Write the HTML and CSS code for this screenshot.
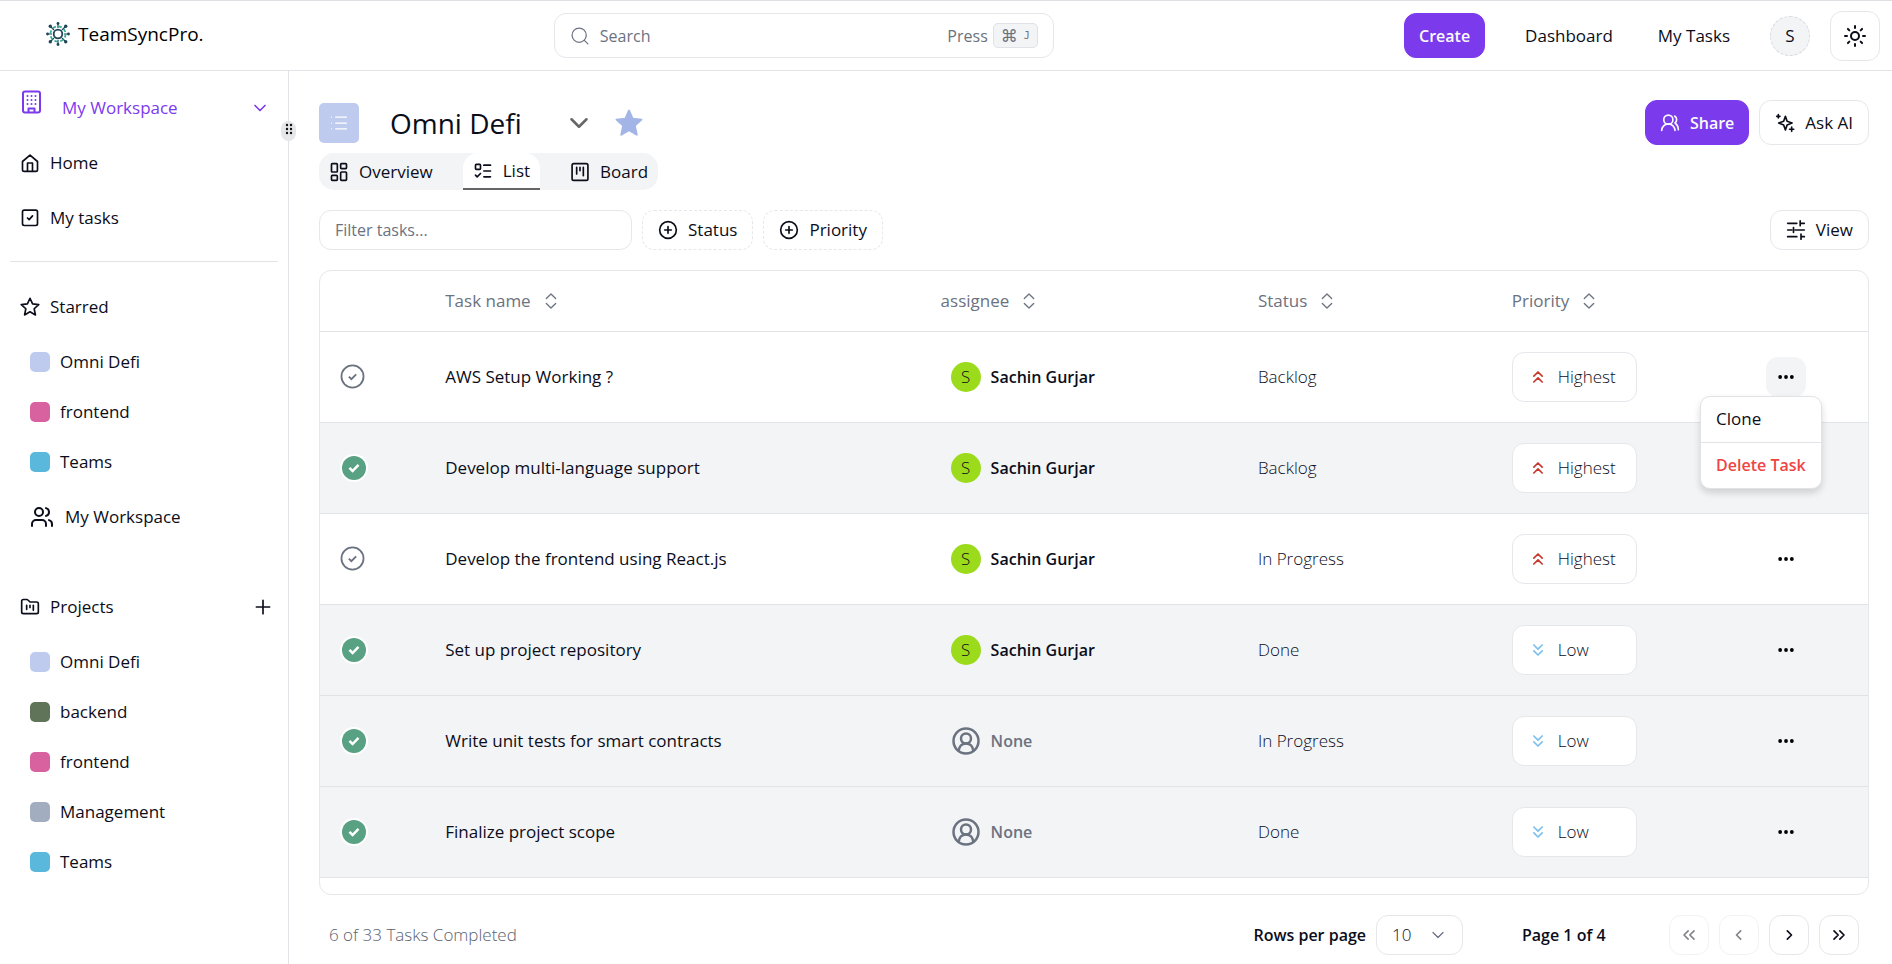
FILE: index.html
```html
<!DOCTYPE html>
<html lang="en">
<head>
<meta charset="utf-8">
<title>TeamSyncPro.</title>
<link rel="stylesheet" href="styles.css">
</head>
<body>
<svg class="sprite" aria-hidden="true">
  <symbol id="i-sort" viewBox="0 0 15 15"><path d="M4 5.600L7.500 2.300l3.500 3.300M4 9.400l3.500 3.300 3.500-3.300" fill="none" stroke="currentColor" stroke-linecap="round" stroke-linejoin="round"/></symbol>
  <symbol id="i-check" viewBox="0 0 24 24"><circle cx="12" cy="12" r="10.600" fill="none" stroke="currentColor" stroke-width="1.700"/><path d="M8.500 12.200l2.400 2.400 4.600-4.700" fill="none" stroke="currentColor" stroke-width="1.800"/></symbol>
  <symbol id="i-checked" viewBox="0 0 28 28"><circle cx="14" cy="14" r="14" fill="#fff"/><circle cx="14" cy="14" r="12" fill="#58a182"/><path d="M9.400 13.800l3.200 3.200 5.900-6.200" fill="none" stroke="#fff" stroke-width="2.500"/></symbol>
  <symbol id="i-up" viewBox="0 0 24 24"><path d="m17 11-5-5-5 5M17 18l-5-5-5 5"/></symbol>
  <symbol id="i-down" viewBox="0 0 24 24"><path d="m7 6 5 5 5-5M7 13l5 5 5-5"/></symbol>
  <symbol id="i-more" viewBox="0 0 20 20"><circle cx="3.500" cy="10" r="2.100"/><circle cx="10" cy="10" r="2.100"/><circle cx="16.500" cy="10" r="2.100"/></symbol>
  <symbol id="i-person" viewBox="0 0 24 24"><circle cx="12" cy="12" r="10"/><circle cx="12" cy="10" r="4"/><path d="M6.200 19.800c.3-3.600 2.600-5.800 5.800-5.800s5.500 2.200 5.800 5.800"/></symbol>
  <symbol id="i-pluscircle" viewBox="0 0 24 24"><circle cx="12" cy="12" r="10"/><path d="M12 8v8M8 12h8"/></symbol>
  <symbol id="i-chev" viewBox="0 0 24 24"><path d="m6 9 6 6 6-6"/></symbol>
</svg>

<header class="topbar">
  <a class="brand" href="#">
    <svg class="logo" viewBox="0 0 24 24" aria-hidden="true">
      <g stroke="#1d4457" stroke-width="1.200" fill="none"><path d="M12 2v4M12 18v4M2 12h4M18 12h4M5 5l3 3M16 16l3 3M5 19l3-3M16 8l3-3"/></g>
      <circle cx="12" cy="12" r="4.300" fill="none" stroke="#1d4457" stroke-width="1.800"/>
      <circle cx="12" cy="12" r="7.600" fill="none" stroke="#3cab97" stroke-width="1.800" stroke-dasharray="3.600 2.370"/>
      <g fill="#1d4457"><circle cx="12" cy="1.500" r="1.400"/><circle cx="12" cy="22.500" r="1.400"/><circle cx="1.500" cy="12" r="1.400"/><circle cx="22.500" cy="12" r="1.400"/><circle cx="4.300" cy="4.300" r="1.700"/><circle cx="19.700" cy="4.300" r="1.700"/><circle cx="4.300" cy="19.700" r="1.700"/><circle cx="19.700" cy="19.700" r="1.700"/></g>
    </svg>
    <span>TeamSyncPro.</span>
  </a>
  <button class="search" type="button">
    <svg class="ic s20" viewBox="0 0 24 24"><circle cx="11" cy="11" r="8.500"/><path d="m21.500 21.500-4.300-4.300"/></svg>
    <span class="search-label">Search</span>
    <span>Press</span>
    <kbd><span class="cmd">⌘</span>J</kbd>
  </button>
  <nav class="topnav">
    <button class="btn primary create" type="button">Create</button>
    <a href="#" class="navlink">Dashboard</a>
    <a href="#" class="navlink">My Tasks</a>
    <button class="avatar" type="button">S</button>
    <button class="btn theme" type="button" aria-label="Toggle theme"><svg class="ic s24" viewBox="0 0 24 24"><circle cx="12" cy="12" r="4"/><path d="M12 2v2M12 20v2M4.930 4.930l1.410 1.410M17.660 17.660l1.410 1.410M2 12h2M20 12h2M6.340 17.660l-1.410 1.410M19.070 4.930l-1.410 1.410"/></svg></button>
  </nav>
</header>

<div class="shell">
  <aside class="sidebar">
    <button class="side-link workspace" type="button">
      <svg class="ic s24 building" viewBox="0 0 24 24"><rect x="3" y="1.500" width="17" height="21" rx="2"/><path d="M8.500 22v-3.500h6V22"/><path d="M7.500 6h.01M11.500 6h.01M15.500 6h.01M7.500 10h.01M11.500 10h.01M15.500 10h.01M7.500 14h.01M11.500 14h.01M15.500 14h.01"/></svg>
      <span class="grow">My Workspace</span>
      <svg class="ic s20" viewBox="0 0 24 24"><use href="#i-chev"/></svg>
    </button>
    <a class="side-link" href="#"><svg class="ic s20" viewBox="0 0 24 24"><path d="M3 10.200 12 2.500l9 7.700V20a2 2 0 0 1-2 2H5a2 2 0 0 1-2-2zM9 22V12h6v10"/></svg><span>Home</span></a>
    <a class="side-link" href="#"><svg class="ic s20" viewBox="0 0 24 24"><rect x="3" y="2.500" width="18" height="18.500" rx="2"/><path d="m9 12 2 2 4-4.500"/></svg><span>My tasks</span></a>
    <hr>
    <section class="group">
      <h2 class="side-link"><svg class="ic s20" viewBox="0 0 24 24"><path d="m12 1.500 3.100 6.800 7.400.8-5.500 5 1.500 7.400-6.500-3.700-6.500 3.700L7 14.100l-5.500-5 7.400-.8z"/></svg><span>Starred</span></h2>
      <ul class="projects">
        <li><a href="#"><i class="swatch omni"></i>Omni Defi</a></li>
        <li><a href="#"><i class="swatch front"></i>frontend</a></li>
        <li><a href="#"><i class="swatch teams"></i>Teams</a></li>
      </ul>
      <a class="team" href="#"><svg class="ic s24" viewBox="0 0 24 24"><path d="M16 21v-2a4 4 0 0 0-4-4H6a4 4 0 0 0-4 4v2"/><circle cx="9" cy="7" r="4"/><path d="M22 21v-2a4 4 0 0 0-3-3.870M16 3.130a4 4 0 0 1 0 7.750"/></svg>My Workspace</a>
    </section>
    <section class="group">
      <h2 class="side-link"><svg class="ic s20" viewBox="0 0 24 24"><path d="M4 20h16a2 2 0 0 0 2-2V8a2 2 0 0 0-2-2h-8l-2.500-2.400A2 2 0 0 0 8 3H4a2 2 0 0 0-2 2v13c0 1.100.9 2 2 2ZM8 10v5M12 10v2.500M16 10v6"/></svg><span class="grow">Projects</span>
        <button class="bare" type="button" aria-label="Add project"><svg class="ic s20" viewBox="0 0 24 24"><path d="M12 4v16M4 12h16"/></svg></button></h2>
      <ul class="projects">
        <li><a href="#"><i class="swatch omni"></i>Omni Defi</a></li>
        <li><a href="#"><i class="swatch back"></i>backend</a></li>
        <li><a href="#"><i class="swatch front"></i>frontend</a></li>
        <li><a href="#"><i class="swatch mgmt"></i>Management</a></li>
        <li><a href="#"><i class="swatch teams"></i>Teams</a></li>
      </ul>
    </section>
    <span class="handle"><svg viewBox="0 0 12 16" width="12" height="16"><g fill="#111"><circle cx="4" cy="4" r="1.200"/><circle cx="8" cy="4" r="1.200"/><circle cx="4" cy="8" r="1.200"/><circle cx="8" cy="8" r="1.200"/><circle cx="4" cy="12" r="1.200"/><circle cx="8" cy="12" r="1.200"/></g></svg></span>
  </aside>

  <main class="main">
    <div class="title-row">
      <span class="proj-icon"><svg class="ic s20" viewBox="0 0 24 24"><path d="M8 5h13M8 12h13M8 19h13M3 5h.01M3 12h.01M3 19h.01"/></svg></span>
      <h1>Omni Defi</h1>
      <button class="bare chev" type="button" aria-label="Project menu"><svg class="ic s30" viewBox="0 0 24 24"><use href="#i-chev"/></svg></button>
      <button class="bare" type="button" aria-label="Unstar"><svg width="30" height="30" viewBox="0 0 24 24" fill="#a3b5e6" stroke="#a3b5e6" stroke-width="1.500" stroke-linejoin="round"><path d="m12 2 2.900 6.500 7.100.8-5.300 4.800 1.500 7.300L12 17.800l-6.200 3.600 1.500-7.300L2 9.300l7.100-.8z"/></svg></button>
      <div class="actions">
        <button class="btn primary" type="button"><svg class="ic s20" viewBox="0 0 24 24"><path d="M18 21a8 8 0 0 0-16 0"/><circle cx="10" cy="8" r="5.500"/><path d="M22 20c0-3.370-2-6.500-4-8a5 5 0 0 0-.45-8.300"/></svg>Share</button>
        <button class="btn" type="button"><svg class="ic s20" viewBox="0 0 24 24"><path d="m12.500 4 2 6 6 2-6 2.300-2 6-2.100-6-6-2.300 6-2zM4 2v4M2 4h4M20 17v5M17.500 19.500h5"/></svg>Ask AI</button>
      </div>
    </div>

    <div class="tabs" role="tablist">
      <button role="tab" type="button"><svg class="ic s20" viewBox="0 0 24 24"><rect x="3" y="2" width="7" height="10" rx="1"/><rect x="14" y="2" width="7" height="6" rx="1"/><rect x="14" y="12" width="7" height="10" rx="1"/><rect x="3" y="16" width="7" height="6" rx="1"/></svg>Overview</button>
      <button role="tab" type="button" class="active" aria-selected="true"><svg class="ic s20" viewBox="0 0 24 24"><rect x="3" y="4" width="6" height="6" rx="1"/><path d="m3 17 2 2 4-4M13 5h8M13 12h8M13 19h8"/></svg>List</button>
      <button role="tab" type="button"><svg class="ic s20" viewBox="0 0 24 24"><rect x="2.500" y="2" width="19" height="20" rx="2"/><path d="M8 6.500v8M12 6.500v4M16 6.500v10"/></svg>Board</button>
    </div>

    <div class="filters">
      <input type="text" class="filter" placeholder="Filter tasks..." aria-label="Filter tasks">
      <button class="btn small dashed" type="button"><svg class="ic s20" viewBox="0 0 24 24"><use href="#i-pluscircle"/></svg>Status</button>
      <button class="btn small dashed" type="button"><svg class="ic s20" viewBox="0 0 24 24"><use href="#i-pluscircle"/></svg>Priority</button>
      <button class="btn small view" type="button"><svg class="ic s20" viewBox="0 0 24 24"><path d="M2 4h11M17 4h5M17 1v6M2 12h5M11 12h11M9 9v6M2 20h11M18 20h4M18 17v6"/></svg>View</button>
    </div>

    <div class="table-card">
      <table>
        <colgroup><col class="c1"><col class="c2"><col class="c3"><col class="c4"><col class="c5"><col></colgroup>
        <thead>
          <tr><th></th>
            <th><button class="sort" type="button">Task name<svg class="s20"><use href="#i-sort"/></svg></button></th>
            <th><button class="sort" type="button">assignee<svg class="s20"><use href="#i-sort"/></svg></button></th>
            <th><button class="sort" type="button">Status<svg class="s20"><use href="#i-sort"/></svg></button></th>
            <th><button class="sort" type="button">Priority<svg class="s20"><use href="#i-sort"/></svg></button></th>
            <th></th></tr>
        </thead>
        <tbody>
          <tr><td><svg class="todo"><use href="#i-check"/></svg></td><td class="name">AWS Setup Working ?</td><td><span class="who"><i class="face">S</i>Sachin Gurjar</span></td><td>Backlog</td><td><button class="prio high" type="button"><svg class="ic s20"><use href="#i-up"/></svg>Highest</button></td>
            <td><div class="menu-anchor"><button class="more open" type="button" aria-label="Row actions"><svg><use href="#i-more"/></svg></button>
              <div class="menu" role="menu"><button role="menuitem" type="button">Clone</button><button role="menuitem" type="button" class="danger">Delete Task</button></div></div></td></tr>
          <tr class="done"><td><svg class="tick"><use href="#i-checked"/></svg></td><td class="name">Develop multi-language support</td><td><span class="who"><i class="face">S</i>Sachin Gurjar</span></td><td>Backlog</td><td><button class="prio high" type="button"><svg class="ic s20"><use href="#i-up"/></svg>Highest</button></td><td><button class="more" type="button" aria-label="Row actions"><svg><use href="#i-more"/></svg></button></td></tr>
          <tr><td><svg class="todo"><use href="#i-check"/></svg></td><td class="name">Develop the frontend using React.js</td><td><span class="who"><i class="face">S</i>Sachin Gurjar</span></td><td>In Progress</td><td><button class="prio high" type="button"><svg class="ic s20"><use href="#i-up"/></svg>Highest</button></td><td><button class="more" type="button" aria-label="Row actions"><svg><use href="#i-more"/></svg></button></td></tr>
          <tr class="done"><td><svg class="tick"><use href="#i-checked"/></svg></td><td class="name">Set up project repository</td><td><span class="who"><i class="face">S</i>Sachin Gurjar</span></td><td>Done</td><td><button class="prio low" type="button"><svg class="ic s20"><use href="#i-down"/></svg>Low</button></td><td><button class="more" type="button" aria-label="Row actions"><svg><use href="#i-more"/></svg></button></td></tr>
          <tr class="done"><td><svg class="tick"><use href="#i-checked"/></svg></td><td class="name">Write unit tests for smart contracts</td><td><span class="who none"><svg class="ic s30"><use href="#i-person"/></svg>None</span></td><td>In Progress</td><td><button class="prio low" type="button"><svg class="ic s20"><use href="#i-down"/></svg>Low</button></td><td><button class="more" type="button" aria-label="Row actions"><svg><use href="#i-more"/></svg></button></td></tr>
          <tr class="done"><td><svg class="tick"><use href="#i-checked"/></svg></td><td class="name">Finalize project scope</td><td><span class="who none"><svg class="ic s30"><use href="#i-person"/></svg>None</span></td><td>Done</td><td><button class="prio low" type="button"><svg class="ic s20"><use href="#i-down"/></svg>Low</button></td><td><button class="more" type="button" aria-label="Row actions"><svg><use href="#i-more"/></svg></button></td></tr>
        </tbody>
      </table>
    </div>

    <footer class="pager">
      <span class="count">6 of 33 Tasks Completed</span>
      <label for="rows">Rows per page</label>
      <span class="select-wrap"><select id="rows"><option>10</option><option>20</option></select><svg class="ic s20" viewBox="0 0 24 24"><use href="#i-chev"/></svg></span>
      <span class="page">Page 1 of 4</span>
      <div class="page-btns">
        <button type="button" disabled aria-label="First page"><svg class="ic s20" viewBox="0 0 24 24"><path d="m11 17-5-5 5-5M18 17l-5-5 5-5"/></svg></button>
        <button type="button" disabled aria-label="Previous page"><svg class="ic s20" viewBox="0 0 24 24"><path d="m14 17-5-5 5-5"/></svg></button>
        <button type="button" aria-label="Next page"><svg class="ic s20" viewBox="0 0 24 24"><path d="m10 17 5-5-5-5"/></svg></button>
        <button type="button" aria-label="Last page"><svg class="ic s20" viewBox="0 0 24 24"><path d="m6 17 5-5-5-5M13 17l5-5-5-5"/></svg></button>
      </div>
    </footer>
  </main>
</div>
</body>
</html>
```
FILE: styles.css
```css
*, *::before, *::after { box-sizing: border-box; }
body {
  margin: 0;
  height: 100vh;
  display: flex;
  flex-direction: column;
  overflow: hidden;
  background: #fff;
  color: #0b0d1a;
  font: 500 17px/24px "Open Sans", "Noto Sans", sans-serif;
}
button, input, select { font: inherit; color: inherit; }
button { cursor: pointer; }
a { color: inherit; text-decoration: none; }
h1, h2, ul { margin: 0; padding: 0; font: inherit; list-style: none; }
.sprite { position: absolute; width: 0; height: 0; }
.ic { fill: none; stroke: currentColor; stroke-width: 2; stroke-linecap: round; stroke-linejoin: round; }
svg { flex: none; display: block; }
.s20 { width: 20px; height: 20px; }
.s24 { width: 24px; height: 24px; }
.s30 { width: 30px; height: 30px; }
.grow { flex: 1; text-align: left; }
.bare { border: 0; padding: 0; background: none; display: flex; }

/* Top bar */
.topbar {
  height: 71px;
  flex: none;
  display: flex;
  justify-content: space-between;
  align-items: center;
  border-top: 1px solid #dedfe2;
  border-bottom: 1px solid #e1e3e7;
  padding: 0 12px 0 46px;
}
.brand { display: flex; align-items: center; gap: 8px; padding-bottom: 4px; font-size: 19px; color: #000; }
.logo { width: 24px; height: 24px; }
.search {
  width: 500px;
  height: 45px;
  display: flex;
  align-items: center;
  gap: 5px;
  padding: 0 15px;
  border: 1px solid #e5e7eb;
  border-radius: 12px;
  background: #fff;
  color: #6b7280;
  font-size: 16px;
}
.search .ic { stroke-width: 1.500; }
.search-label { flex: 1; text-align: left; padding-left: 5px; }
kbd {
  height: 25px;
  display: flex;
  align-items: center;
  gap: 6px;
  padding: 0 7px;
  border: 1px solid #e0e2e7;
  border-radius: 5px;
  background: #f3f4f6;
  font: 10px/20px "DejaVu Sans Mono", monospace;
}
.cmd { font-family: "DejaVu Sans", sans-serif; font-size: 17px; }
.topnav { display: flex; align-items: center; justify-content: flex-end; }
.btn {
  height: 45px;
  display: flex;
  align-items: center;
  justify-content: center;
  gap: 10px;
  padding: 0 15px;
  border: 1px solid #e5e7eb;
  border-radius: 12px;
  background: #fff;
}
.btn.primary { padding: 0 14px; border-color: #7c3aed; background: #7c3aed; color: #f9fafb; font-size: 16px; font-weight: 600; }
.btn.small { height: 40px; }
.btn.dashed { border-style: dashed; }
.navlink { margin-left: 40px; }
.navlink + .navlink { margin-left: 45px; }
.avatar { width: 40px; height: 40px; margin: 0 20px 0 40px; padding: 0; border: 1px dashed #d5d9e0; border-radius: 50%; background: #f3f4f6; }
.btn.theme { width: 50px; height: 50px; padding: 0; }

.shell { flex: 1; min-height: 0; display: flex; }

/* Sidebar */
.sidebar { position: relative; width: 289px; flex: none; border-right: 1px solid #e1e3e7; padding-top: 9px; }
.side-link { width: 100%; height: 55px; display: flex; align-items: center; gap: 10px; padding: 0 15px 0 20px; border: 0; background: none; }
.side-link.workspace { color: #7c3aed; gap: 18px; padding-right: 18px; }
.building { align-self: flex-start; margin-top: 10px; }
.sidebar hr { margin: 16px 10px 17px; border: 0; border-top: 1px solid #e1e3e7; }
.projects { margin-top: 3px; }
.projects a { height: 50px; display: flex; align-items: center; gap: 10px; padding-left: 30px; }
.swatch { width: 20px; height: 20px; border-radius: 5px; }
.omni { background: #bfcbee; }
.front { background: #d8619f; }
.teams { background: #5ab8dc; }
.back { background: #5f7458; }
.mgmt { background: #a2adc0; }
.team { height: 60px; display: flex; align-items: center; gap: 11px; padding-left: 30px; }
.group + .group { margin-top: 32px; }
.handle { position: absolute; right: -8px; top: 50px; width: 15px; height: 20px; border-radius: 8px; background: #e5e7eb; display: flex; justify-content: center; }

/* Project header */
.main { flex: 1; min-width: 0; display: flex; flex-direction: column; padding: 29px 23px 9px 30px; }
.title-row { height: 45px; display: flex; align-items: center; }
.proj-icon { width: 40px; height: 40px; border-radius: 5px; background: #bfcbee; color: #fff; display: flex; align-items: center; justify-content: center; }
.proj-icon .ic { stroke-width: 1.500; }
h1 { margin: 0 42px 0 31px; font-size: 28px; line-height: 40px; }
.chev { margin-right: 20px; color: #666; }
.actions { margin-left: auto; display: flex; gap: 10px; }
.tabs { align-self: flex-start; display: flex; gap: 20px; margin-top: 8px; border-radius: 15px; background: #f3f4f6; }
.tabs button { height: 37px; display: flex; align-items: center; gap: 10px; padding: 0 10px; border: 0; background: none; }
.tabs .active { border-bottom: 2px solid #666; border-radius: 15px 15px 0 0; background: #fff; }
.filters { display: flex; gap: 10px; margin-top: 20px; }
.filter { width: 313px; height: 40px; padding: 0 15px; border: 1px solid #e5e7eb; border-radius: 12px; outline: 0; font-size: 16px; font-weight: 400; }
.filter::placeholder { color: #6b7280; opacity: 1; }
.view { margin-left: auto; }

/* Task table */
.table-card { flex: 1; min-height: 0; margin-top: 20px; border: 1px solid #e5e7eb; border-radius: 12px; }
table { width: 100%; border-collapse: collapse; table-layout: fixed; }
.c1 { width: 6.8%; }
.c2 { width: 32%; }
.c3 { width: 20.5%; }
.c4 { width: 16.4%; }
.c5 { width: 16.4%; }
th, td { padding: 0 20px; text-align: left; border-bottom: 1px solid #e1e3e7; font-weight: 300; }
th { height: 60px; }
td { height: 91px; }
.name { font-weight: 500; }
.done { background: #f3f4f6; }
.sort { border: 0; padding: 0; background: none; display: flex; align-items: center; gap: 10px; color: #6b7280; font-weight: 500; }
.todo { width: 25px; height: 25px; color: #6b7280; }
.tick { width: 28px; height: 28px; }
.who { display: flex; align-items: center; gap: 10px; padding-left: 10px; font-size: 16px; font-weight: 600; }
.face { width: 30px; height: 30px; border-radius: 50%; background: #9bdb1b; text-align: center; font: 300 17px/30px "Open Sans", sans-serif; }
.none { color: #6b7280; }
.prio { width: 125px; height: 50px; display: flex; align-items: center; gap: 10px; padding: 0 15px; border: 1px solid #e5e7eb; border-radius: 12px; background: #fff; font-weight: 300; }
.high .ic { color: #c9372c; }
.low .ic { color: #7cc0ee; }
.more { width: 40px; height: 40px; display: flex; align-items: center; justify-content: center; padding: 0; border: 0; border-radius: 12px; background: none; }
.more svg { width: 18px; height: 18px; }
.open { background: #f3f4f6; }
.menu-anchor { position: relative; width: 40px; }
.menu { position: absolute; z-index: 2; top: 39px; right: -16px; width: max-content; border: 1px solid #e1e3e7; border-radius: 10px; background: #fff; box-shadow: 0 4px 7px rgb(0 0 0 / 15%); }
.menu button { width: 100%; height: 45px; display: block; padding: 0 15px; border: 0; background: none; text-align: left; font-weight: 500; }
.menu .danger { height: 46px; border-top: 1px solid #e1e3e7; color: #ef4444; font-size: 16px; font-weight: 600; }

/* Pagination */
.pager { height: 40px; display: flex; align-items: center; margin-top: 20px; padding: 0 10px; }
.count { flex: 1; font-weight: 300; color: #5b6270; }
.pager label, .page { font-size: 16px; font-weight: 600; }
.page { min-width: 88px; }
.select-wrap { display: grid; align-items: center; width: 87px; margin: 0 59px 0 10px; }
.select-wrap > * { grid-area: 1 / 1; }
.select-wrap select { appearance: none; height: 40px; padding: 0 15px; border: 1px solid #e5e7eb; border-radius: 12px; background: #fff; font-weight: 300; }
.select-wrap svg { justify-self: end; margin-right: 15px; color: #6b7280; stroke-width: 1.500; pointer-events: none; }
.page-btns { display: flex; gap: 10px; margin-left: 59px; }
.page-btns button { width: 40px; height: 40px; display: flex; align-items: center; justify-content: center; padding: 0; border: 1px solid #e5e7eb; border-radius: 12px; background: #fff; }
.page-btns button:disabled { opacity: .5; }
```
